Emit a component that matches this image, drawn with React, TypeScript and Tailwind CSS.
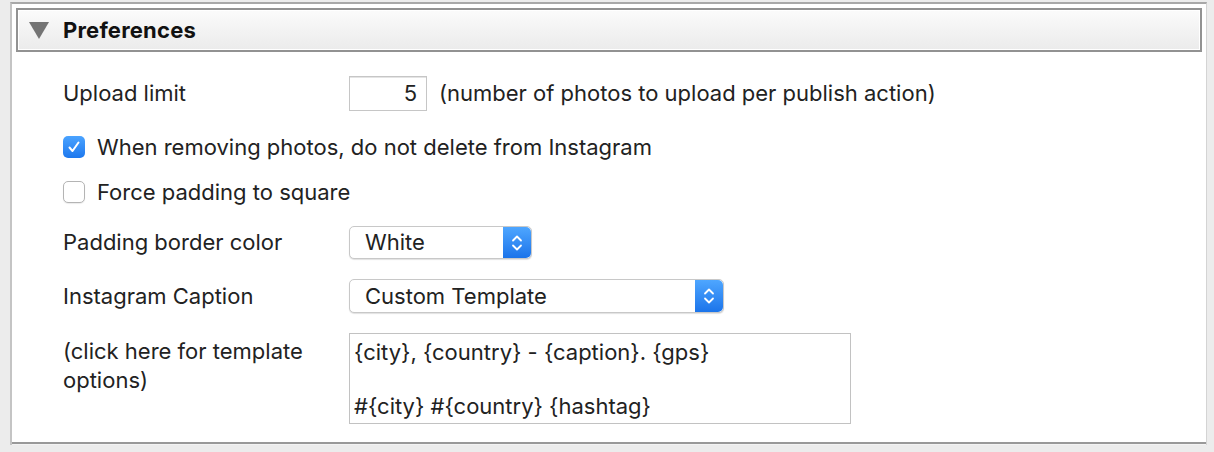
import React from "react";

const ui = "font-[Inter,sans-serif]";

function Stepper() {
  return (
    <div className="flex h-full w-[28px] items-center justify-center rounded-r-[5px] bg-gradient-to-b from-[#4ea6ff] to-[#1b74ea]">
      <svg width="12" height="20" viewBox="0 0 12 20" fill="none" stroke="white" strokeWidth="1.8" strokeLinecap="round" strokeLinejoin="round">
        <path d="M2 7.5 6 3.5 10 7.5" />
        <path d="M2 12.5 6 16.5 10 12.5" />
      </svg>
    </div>
  );
}

function PopUp({ value, width, height }: { value: string; width: string; height: string }) {
  return (
    <div className={`flex ${width} ${height} items-stretch rounded-[5px] border border-[#c8c8c8] bg-white shadow-[0_1px_1px_rgba(0,0,0,0.12)]`}>
      <div className="flex flex-1 items-center pl-[15px] text-[22px] text-[#222]">{value}</div>
      <Stepper />
    </div>
  );
}

function Checkbox({ checked, label }: { checked: boolean; label: string }) {
  return (
    <div className="flex h-[22px] items-center">
      {checked ? (
        <div className="flex h-[22px] w-[22px] items-center justify-center rounded-[5px] bg-gradient-to-b from-[#4aa3ff] to-[#1d78ee]">
          <svg width="14" height="14" viewBox="0 0 14 14" fill="none" stroke="white" strokeWidth="2" strokeLinecap="round" strokeLinejoin="round">
            <path d="M2.5 7.5 5.5 11 11.5 2.5" />
          </svg>
        </div>
      ) : (
        <div className="h-[22px] w-[22px] rounded-[5px] border border-[#b4b4b4] bg-white shadow-[0_1px_1px_rgba(0,0,0,0.08)]" />
      )}
      <span className="ml-[12px] text-[22px] text-[#222]">{label}</span>
    </div>
  );
}

export default function App() {
  return (
    <div className={`h-[452px] w-[1214px] overflow-hidden bg-[#ececec] pt-[2px] pl-[10px] pr-[7px] ${ui}`}>
      <div className="flex h-[443px] flex-col border-t-2 border-l-2 border-r border-t-[#a8a8a8] border-l-[#c4c4c4] border-r-[#d4d4d4] bg-white">
        {/* Section header */}
        <div className="mx-[4px] mt-[4px] flex h-[44px] items-center border-2 border-[#929292] bg-gradient-to-b from-[#fbfbfb] via-[#f3f3f3] to-[#ebebeb] shadow-[inset_0_0_0_1px_#ffffff]">
          <svg className="ml-[10px]" width="22" height="20" viewBox="0 0 22 20">
            <path d="M1 2 H21 L11 19 Z" fill="#747474" />
          </svg>
          <span className="ml-[13px] text-[22px] font-bold tracking-[0.2px] text-[#111]">Preferences</span>
        </div>

        <div className="flex flex-col pl-[51px]">
          {/* Upload limit */}
          <div className="mt-[24px] flex h-[35px] items-center">
            <span className="w-[286px] text-[22px] text-[#222]">Upload limit</span>
            <div className="flex h-[35px] w-[78px] items-center justify-end border border-[#c6c6c6] bg-white pr-[9px] text-[22px] text-[#222] shadow-[inset_0_1px_0_#e4e4e4]">
              5
            </div>
            <span className="ml-[12px] text-[22px] text-[#222]">(number of photos to upload per publish action)</span>
          </div>

          <div className="mt-[25px]">
            <Checkbox checked label="When removing photos, do not delete from Instagram" />
          </div>
          <div className="mt-[23px]">
            <Checkbox checked={false} label="Force padding to square" />
          </div>

          {/* Padding border color */}
          <div className="mt-[23px] flex h-[33px] items-center">
            <span className="w-[286px] text-[22px] text-[#222]">Padding border color</span>
            <PopUp value="White" width="w-[183px]" height="h-[33px]" />
          </div>

          {/* Caption */}
          <div className="mt-[20px] flex h-[34px] items-center">
            <span className="w-[286px] text-[22px] text-[#222]">Instagram Caption</span>
            <PopUp value="Custom Template" width="w-[375px]" height="h-[34px]" />
          </div>

          <div className="mt-[20px] flex">
            <div className="w-[286px] pt-[4px] text-[22px] leading-[29px] text-[#222]">
              (click here for template
              <br />
              options)
            </div>
            <div className="h-[91px] w-[502px] whitespace-pre border border-[#c2c2c2] bg-white pl-[4px] pt-[5px] text-[22px] leading-[27px] text-[#222]">
              {"{city}, {country} - {caption}. {gps}\n\n#{city} #{country} {hashtag}"}
            </div>
          </div>
        </div>

        <div className="mt-auto h-[3px] border-t-2 border-[#999] bg-[#f3f3f3]" />
      </div>
    </div>
  );
}
